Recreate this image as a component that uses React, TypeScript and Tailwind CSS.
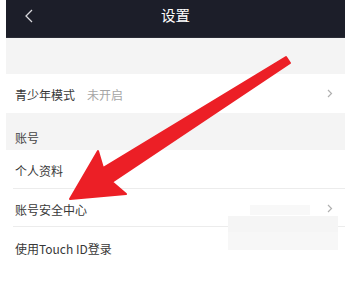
import { ReactNode } from 'react'

const FONT = { fontFamily: '"Noto Sans CJK SC", "Noto Sans", sans-serif' }

function Chevron({ className }: { className?: string }) {
  return (
    <svg className={className} width="6" height="9" viewBox="0 0 6 9" fill="none" stroke="currentColor" strokeWidth="1.2" aria-hidden>
      <polyline points="1,1 4.5,4.5 1,8" />
    </svg>
  )
}

function Row({ children, arrow, divider, h }: { children: ReactNode; arrow?: boolean; divider?: boolean; h: string }) {
  return (
    <div className={`relative flex items-center bg-white pl-[9px] pr-[12px] ${h}`}>
      <div className="flex flex-1 items-center pt-[3px] text-[12px] text-[#383838]">{children}</div>
      {arrow && <Chevron className="text-[#b0b0b0]" />}
      {divider && <div className="absolute bottom-0 left-[7px] right-0 h-px bg-[#ececec]" />}
    </div>
  )
}

export default function App() {
  return (
    <div className="relative h-[285px] w-[345px] overflow-hidden bg-white pl-[6px]" style={FONT}>
      <div className="flex h-full flex-col">
        <div className="relative flex h-[38px] items-center justify-center border-b border-[#2a2c36] bg-[#1c1e29] pb-[7px]">
          <svg className="absolute left-[18px] top-[9px]" width="10" height="14" viewBox="0 0 10 14" fill="none" stroke="#d8d8dc" strokeWidth="1.3" aria-hidden>
            <polyline points="8,1 2,7 8,13" />
          </svg>
          <span className="text-[14.5px] text-white">设置</span>
        </div>
        <div className="h-[36px] bg-[#f4f4f4]" />
        <Row h="h-[39px]" arrow>
          <span>青少年模式</span>
          <span className="ml-[12px] text-[#a5a5a5]">未开启</span>
        </Row>
        <div className="flex h-[37px] items-end bg-[#f4f4f4] pb-[3px] pl-[9px] text-[12px] text-[#444]">账号</div>
        <Row h="h-[39px]" divider>个人资料</Row>
        <Row h="h-[38px]" divider arrow>账号安全中心</Row>
        <Row h="h-[40px]">使用Touch ID登录</Row>
        <div className="flex-1 bg-white" />
      </div>

      {/* blurred watermark patches */}
      <div className="absolute left-[250px] top-[205px] h-[10px] w-[60px] bg-[#f8f8f8]" />
      <div className="absolute left-[228px] top-[216px] h-[16px] w-[110px] bg-[#f5f5f5]" />
      <div className="absolute left-[228px] top-[232px] h-[18px] w-[110px] bg-[#f7f7f7]" />

      <svg className="pointer-events-none absolute left-0 top-0" width="345" height="285" viewBox="0 0 345 285" aria-hidden>
        <polygon
          points="70,199 98,151 103,168 286,57 290,63 112,182 126,194"
          fill="#ec1f26"
          stroke="#ec1f26"
          strokeWidth="2"
          strokeLinejoin="round"
        />
      </svg>
    </div>
  )
}
